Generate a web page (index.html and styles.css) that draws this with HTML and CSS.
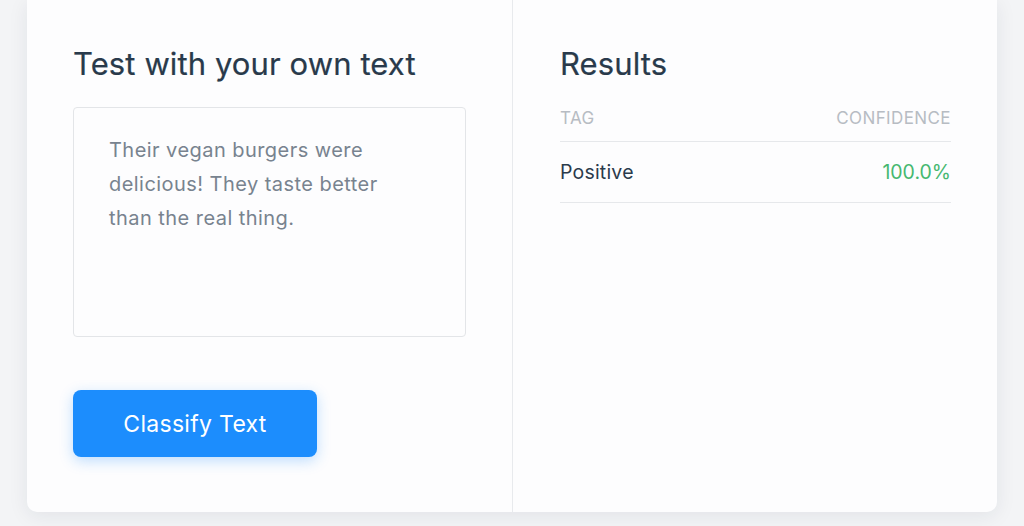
FILE: index.html
```html
<!DOCTYPE html>
<html lang="en">
<head>
<meta charset="utf-8">
<title>Classifier</title>
<link rel="stylesheet" href="styles.css">
</head>
<body>
<main class="card">
  <section class="pane pane-left">
    <h2 class="title">Test with your own text</h2>
    <div class="textbox">Their vegan burgers were delicious! They taste better than the real thing.</div>
    <button class="btn">Classify Text</button>
  </section>
  <section class="pane pane-right">
    <h2 class="title">Results</h2>
    <table class="results">
      <thead>
        <tr><th class="c-tag">Tag</th><th class="c-conf">Confidence</th></tr>
      </thead>
      <tbody>
        <tr><td class="c-tag">Positive</td><td class="c-conf pos">100.0%</td></tr>
      </tbody>
    </table>
  </section>
</main>
</body>
</html>
```
FILE: styles.css
```css
* { box-sizing: border-box; }
html, body { height: 100%; }
body {
  margin: 0;
  background: #f3f4f6;
  font-family: "Inter", "Open Sans", "Liberation Sans", sans-serif;
  overflow: hidden;
}
.card {
  margin: 0 27px;
  height: 512px;
  background: #fdfdfe;
  border-radius: 0 0 10px 10px;
  box-shadow: 0 4px 20px rgba(30, 40, 60, 0.08);
  display: grid;
  grid-template-columns: 486px 1fr;
}
.pane { padding: 46px 46px 0 46px; }
.pane-left { border-right: 1px solid #e8eaed; }
.pane-right { padding-left: 47px; }
.title {
  margin: 0;
  font-size: 31px;
  line-height: 36px;
  font-weight: 400;
  color: #293a4b;
  letter-spacing: 0.1px;
  -webkit-text-stroke: 0.2px #293a4b;
}
.textbox {
  margin-top: 25px;
  width: 393px;
  height: 230px;
  border: 1px solid #e3e5e8;
  border-radius: 4px;
  padding: 25px 40px 0 35px;
  font-size: 20px;
  line-height: 34px;
  letter-spacing: 0.45px;
  color: #78838f;
  background: #fdfdfe;
}
.btn {
  display: block;
  margin-top: 53px;
  width: 244px;
  height: 67px;
  border: 0;
  border-radius: 8px;
  background: #1c8dfd;
  color: #ffffff;
  font-family: inherit;
  font-size: 23px;
  letter-spacing: 0.3px;
  box-shadow: 0 4px 14px rgba(28, 141, 253, 0.28);
}
.results {
  margin-top: 14px;
  width: 100%;
  border-collapse: collapse;
}
.results th {
  font-weight: 400;
  font-size: 17px;
  text-transform: uppercase;
  color: #b7bcc3;
  height: 45px;
  padding: 0;
  border-bottom: 1px solid #e6e8eb;
  letter-spacing: 0.4px;
}
.results td {
  height: 61px;
  padding: 0;
  font-size: 19.5px;
  color: #2b3b4c;
  border-bottom: 1px solid #e6e8eb;
  letter-spacing: 0.2px;
}
.c-tag { text-align: left; }
.c-conf { text-align: right; }
.results td.pos { color: #46b870; letter-spacing: 0; }
```
